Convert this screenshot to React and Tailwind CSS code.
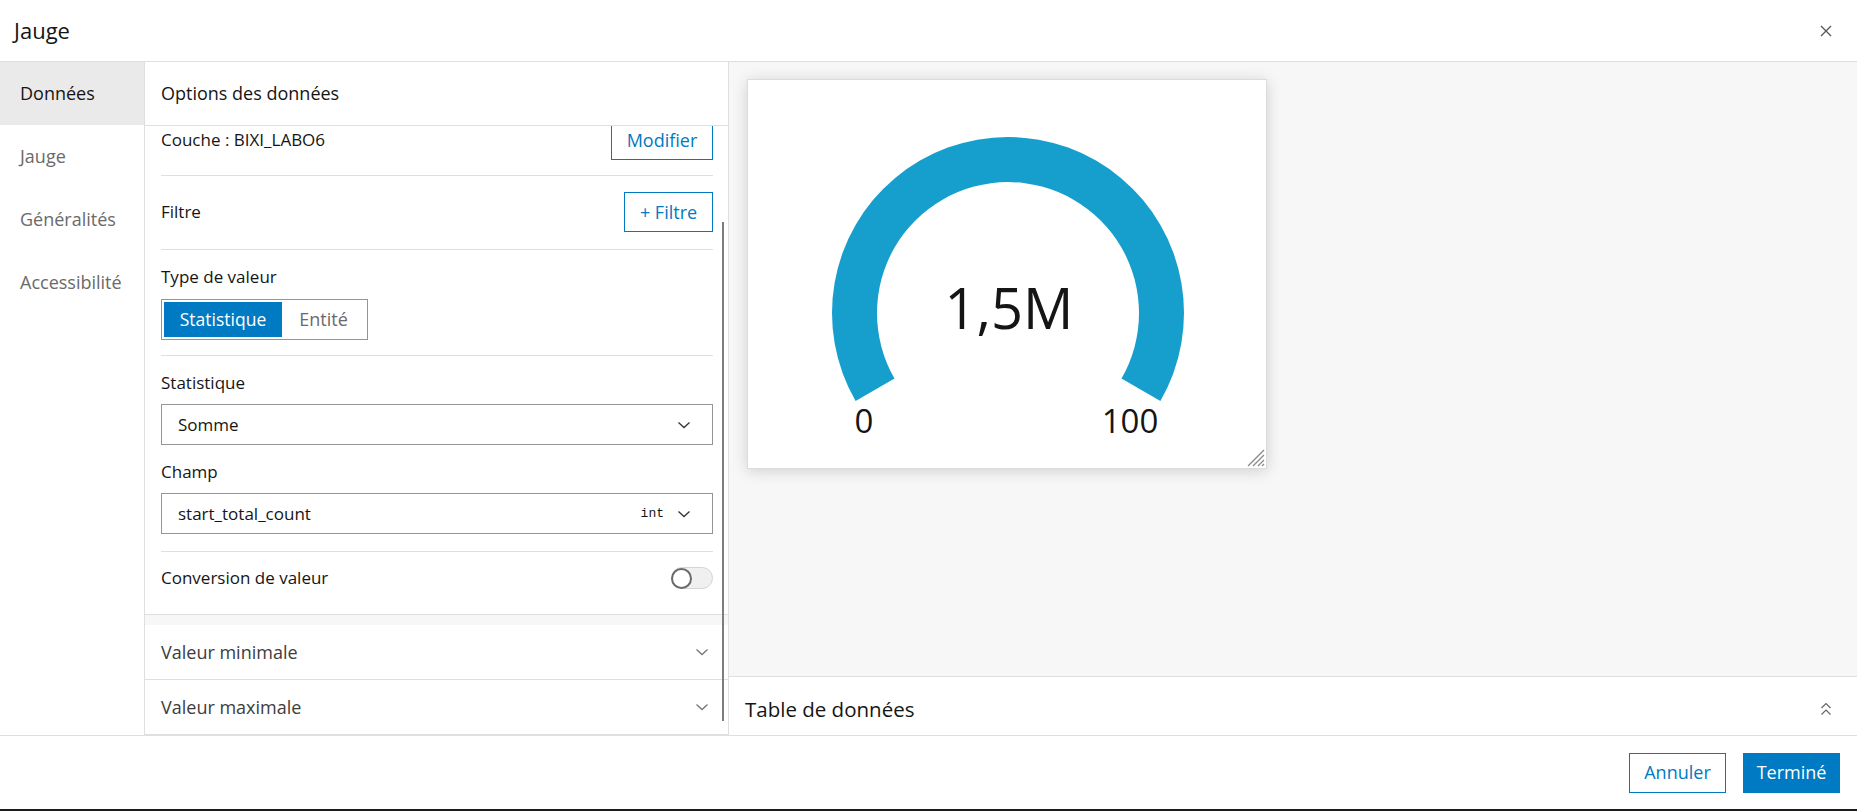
import React from 'react';

const Chevron = ({ className = '' }) => (
  <svg width="14" height="8" viewBox="0 0 14 8" className={className}>
    <path d="M1.5 1.5 L7 6.5 L12.5 1.5" fill="none" stroke="currentColor" strokeWidth="1.3" />
  </svg>
);

function Gauge() {
  // center (260,233) outer r 176, inner r 131, sweep 240deg
  const arc =
    'M 107.6 321 A 176 176 0 1 1 412.4 321 L 373.5 298.5 A 131 131 0 1 0 146.5 298.5 Z';
  return (
    <svg width="518" height="388" viewBox="0 0 518 388">
      <path d={arc} fill="#169fcd" />
      <text x="261" y="249" textAnchor="middle" fontSize="56" fill="#151515" fontFamily="'Open Sans', sans-serif">
        1,5M
      </text>
      <text x="116" y="353" textAnchor="middle" fontSize="33" fill="#151515" fontFamily="'Open Sans', sans-serif">
        0
      </text>
      <text x="382" y="353" textAnchor="middle" fontSize="33" fill="#151515" fontFamily="'Open Sans', sans-serif">
        100
      </text>
      <g stroke="#8a8a8a" strokeWidth="1.2">
        <line x1="500" y1="386" x2="516" y2="370" />
        <line x1="505" y1="386" x2="516" y2="375" />
        <line x1="510" y1="386" x2="516" y2="380" />
        <line x1="514" y1="386" x2="516" y2="384" />
      </g>
    </svg>
  );
}

export default function App() {
  const tabs = ['Données', 'Jauge', 'Généralités', 'Accessibilité'];

  return (
    <div className="w-[1857px] h-[811px] flex flex-col bg-white text-[#151515] font-['Open_Sans',sans-serif] border-b-2 border-[#1c1c1c]">
      {/* header */}
      <div className="h-[62px] shrink-0 flex items-center justify-between pl-[14px] pr-[25px] border-b border-[#dfdfdf]">
        <span className="text-[22px]">Jauge</span>
        <svg width="12" height="12" viewBox="0 0 12 12">
          <path d="M1 1 L11 11 M11 1 L1 11" stroke="#555" strokeWidth="1.3" />
        </svg>
      </div>

      <div className="h-[674px] shrink-0 flex border-b border-[#dfdfdf]">
        {/* sidebar */}
        <div className="w-[145px] shrink-0 border-r border-[#dfdfdf]">
          {tabs.map((t, i) => (
            <div
              key={t}
              className={
                i === 0
                  ? 'h-[63px] flex items-center pl-[20px] text-[18px] bg-[#eaeaea] text-[#151515]'
                  : 'h-[63px] flex items-center pl-[20px] text-[18px] text-[#6a6a6a]'
              }
            >
              {t}
            </div>
          ))}
        </div>

        {/* options panel */}
        <div className="w-[584px] shrink-0 flex flex-col border-r border-[#dfdfdf]">
          <div className="h-[64px] shrink-0 flex items-center pl-[16px] border-b border-[#dfdfdf]">
            <span className="text-[18px] font-medium">Options des données</span>
          </div>
          <div className="flex-1 overflow-hidden relative">
            <div className="-mt-[6px]">
              <div className="ml-[16px] mr-[15px] flex items-center justify-between pb-[15px] border-b border-[#dfdfdf]">
                <span className="text-[17px]">Couche : BIXI_LABO6</span>
                <button className="h-[40px] w-[102px] border border-[#007ac2] text-[#007ac2] text-[18px]">Modifier</button>
              </div>
              <div className="ml-[16px] mr-[15px] flex items-center justify-between pt-[16px] pb-[17px] border-b border-[#dfdfdf]">
                <span className="text-[17px]">Filtre</span>
                <button className="h-[40px] w-[89px] border border-[#007ac2] text-[#007ac2] text-[18px]">+ Filtre</button>
              </div>
              <div className="ml-[16px] mr-[15px] pt-[15px] pb-[15px] border-b border-[#dfdfdf]">
                <div className="h-[24px] leading-[24px] text-[17px]">Type de valeur</div>
                <div className="mt-[10px] w-[207px] h-[41px] border border-[#959595] p-[2px] flex">
                  <div className="w-[118px] h-full bg-[#007ac2] text-white text-[17.5px] flex items-center justify-center">Statistique</div>
                  <div className="flex-1 h-full text-[#6a6a6a] text-[18px] flex items-center justify-center">Entité</div>
                </div>
              </div>
              <div className="ml-[16px] mr-[15px] pt-[15px] pb-[17px] border-b border-[#dfdfdf]">
                <div className="h-[24px] leading-[24px] text-[17px]">Statistique</div>
                <div className="mt-[9px] h-[41px] border border-[#959595] flex items-center justify-between pl-[16px] pr-[21px]">
                  <span className="text-[17px]">Somme</span>
                  <Chevron className="text-[#333]" />
                </div>
                <div className="mt-[15px] h-[24px] leading-[24px] text-[17px]">Champ</div>
                <div className="mt-[9px] h-[41px] border border-[#959595] flex items-center justify-between pl-[16px] pr-[21px]">
                  <span className="text-[17px]">start_total_count</span>
                  <div className="flex items-center gap-[13px]">
                    <span className="text-[13px] font-['Liberation_Mono',monospace]">int</span>
                    <Chevron className="text-[#333]" />
                  </div>
                </div>
              </div>
              <div className="h-[63px] pl-[16px] pr-[15px] pb-[10px] flex items-center justify-between border-b border-[#dfdfdf]">
                <span className="text-[17px] leading-[22px]">Conversion de valeur</span>
                <div className="w-[42px] h-[22px] rounded-full bg-[#f0f0f0] border border-[#d4d4d4] flex items-center">
                  <div className="w-[21px] h-[21px] -ml-[1px] rounded-full bg-white border-2 border-[#6a6a6a]" />
                </div>
              </div>
              <div className="h-[10px] bg-[#f7f7f7]" />
              <div className="h-[55px] flex items-center justify-between pl-[16px] pr-[19px] border-b border-[#dfdfdf]">
                <span className="text-[18px] text-[#3d3d3d]">Valeur minimale</span>
                <Chevron className="text-[#777]" />
              </div>
              <div className="h-[55px] flex items-center justify-between pl-[16px] pr-[19px] border-b border-[#dfdfdf]">
                <span className="text-[18px] text-[#3d3d3d]">Valeur maximale</span>
                <Chevron className="text-[#777]" />
              </div>
            </div>
            {/* scrollbar thumb */}
            <div className="absolute right-[4px] top-[96px] w-[2px] h-[499px] bg-[#7d7d7d]" />
          </div>
        </div>

        {/* preview */}
        <div className="flex-1 flex flex-col">
          <div className="flex-1 bg-[#f7f7f7] pl-[18px] pt-[17px] border-b border-[#dfdfdf]">
            <div className="w-[520px] h-[390px] bg-white border border-[#dcdcdc] shadow-[0_2px_14px_rgba(0,0,0,0.16)]">
              <Gauge />
            </div>
          </div>
          <div className="h-[58px] shrink-0 flex items-center justify-between pt-[6px] pl-[16px] pr-[25px]">
            <span className="text-[20.5px]">Table de données</span>
            <svg width="12" height="14" viewBox="0 0 12 14">
              <path d="M1.5 6 L6 1.5 L10.5 6 M1.5 12.5 L6 8 L10.5 12.5" fill="none" stroke="#666" strokeWidth="1.2" />
            </svg>
          </div>
        </div>
      </div>

      {/* footer */}
      <div className="flex-1 flex items-center justify-end gap-[17px] pr-[17px]">
        <button className="h-[40px] w-[97px] border border-[#007ac2] text-[#007ac2] text-[18px]">Annuler</button>
        <button className="h-[40px] w-[97px] bg-[#007ac2] text-white text-[18px]">Terminé</button>
      </div>
    </div>
  );
}
